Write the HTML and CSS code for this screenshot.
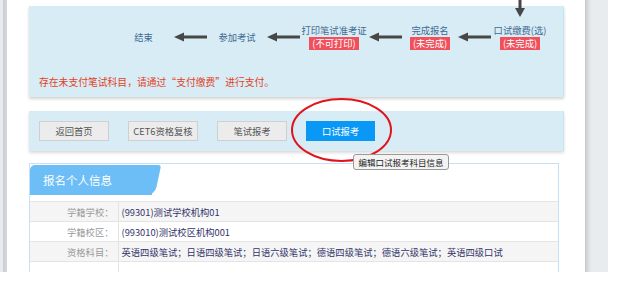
FILE: index.html
```html
<!DOCTYPE html>
<html lang="zh-CN">
<head>
<meta charset="utf-8">
<title>报名信息</title>
<link rel="stylesheet" href="styles.css">
</head>
<body>
<div class="frame">
  <div class="lbar"></div>
  <div class="main">
    <section class="flow-panel">
      <div class="steps">
        <div class="step s-end"><span class="label">结束</span></div>
        <svg class="arrow a1" viewBox="0 0 33 10"><rect x="8" y="3.5" width="25" height="3"/><polygon points="0,5 10,0.5 10,9.5"/></svg>
        <div class="step s-exam"><span class="label">参加考试</span></div>
        <svg class="arrow a2" viewBox="0 0 33 10"><rect x="8" y="3.5" width="25" height="3"/><polygon points="0,5 10,0.5 10,9.5"/></svg>
        <div class="step s-print"><span class="label">打印笔试准考证</span><span class="badge">(不可打印)</span></div>
        <svg class="arrow a3" viewBox="0 0 33 10"><rect x="8" y="3.5" width="25" height="3"/><polygon points="0,5 10,0.5 10,9.5"/></svg>
        <div class="step s-done"><span class="label">完成报名</span><span class="badge">(未完成)</span></div>
        <svg class="arrow a4" viewBox="0 0 33 10"><rect x="8" y="3.5" width="25" height="3"/><polygon points="0,5 10,0.5 10,9.5"/></svg>
        <div class="step s-oral">
          <svg class="down-arrow" viewBox="0 0 10 18"><rect x="3.5" y="0" width="3" height="10"/><polygon points="0,9 10,9 5,18"/></svg>
          <span class="label">口试缴费(选)</span><span class="badge">(未完成)</span>
        </div>
      </div>
      <p class="notice">存在未支付笔试科目，请通过“支付缴费”进行支付。</p>
    </section>

    <section class="actions">
      <button class="btn">返回首页</button>
      <button class="btn">CET6资格复核</button>
      <button class="btn">笔试报考</button>
      <button class="btn btn-primary">口试报考</button>
      <svg class="circle" viewBox="0 0 101 64"><ellipse cx="50.5" cy="32" rx="49.5" ry="31"/></svg>
      <div class="tooltip">编辑口试报考科目信息</div>
    </section>

    <section class="info">
      <div class="tab">报名个人信息</div>
      <table class="info-table">
        <tr class="odd"><th>学籍学校：</th><td>(99301)测试学校机构01</td></tr>
        <tr><th>学籍校区：</th><td>(993010)测试校区机构001</td></tr>
        <tr class="odd"><th>资格科目：</th><td>英语四级笔试；日语四级笔试；日语六级笔试；德语四级笔试；德语六级笔试；英语四级口试</td></tr>
        <tr><th></th><td></td></tr>
      </table>
    </section>
  </div>
  <div class="rbar"></div>
</div>
</body>
</html>
```
FILE: styles.css
```css
* { box-sizing: border-box; }
html, body { margin: 0; padding: 0; background: #fff; }
body {
  font-family: "Noto Sans CJK SC", "Noto Sans", sans-serif;
  font-size: 9.3px;
  color: #333;
}
.frame {
  display: flex;
  height: 272px;
  overflow: hidden;
  width: 608px;
}
.lbar {
  width: 7px;
  flex: none;
  background: linear-gradient(to right, #e9ebee 0, #e9ebee 3px, #cbcfd3 3px, #d3d6da 7px);
}
.rbar {
  width: 23px;
  flex: none;
  background: linear-gradient(to right, #c4c8cc 0, #dadde0 3px, #e8ebee 6px, #e9ecef 23px);
}
.main {
  width: 578px;
  flex: none;
  padding: 6px 0 0 22px;
}

/* flow panel */
.flow-panel {
  width: 535px;
  height: 91px;
  background: #d8ecf5;
  border-right: 1px solid #c5e5ef;
  box-shadow: 0 2px 3px rgba(0,0,0,0.18);
  padding-top: 18px;
}
.steps {
  display: flex;
  align-items: center;
  padding-left: 95px;
  height: 26px;
}
.step {
  display: flex;
  flex-direction: column;
  align-items: center;
  position: relative;
  flex: none;
}
.label {
  color: #3e6a91;
  line-height: 12px;
  white-space: nowrap;
}
.badge {
  margin-top: 1px;
  background: #f0505c;
  color: #fff;
  line-height: 13px;
  padding: 0 3px;
  white-space: nowrap;
}
.s-end { width: 39px; }
.s-exam { width: 40px; margin-left: 10px; }
.s-print { width: 68px; }
.s-done { width: 50px; margin-left: 3px; }
.s-oral { width: 56px; margin-left: 1px; }
.arrow { width: 33px; height: 10px; fill: #474747; flex: none; }
.a1 { margin-left: 11px; }
.a2 { margin-left: 10px; }
.a3 { margin-left: 1px; }
.a4 { margin-left: 3px; }
.down-arrow {
  position: absolute;
  left: 23px;
  top: -25px;
  width: 10px;
  height: 18px;
  fill: #474747;
}
.notice {
  margin: 25px 0 0 10px;
  color: #e2411e;
  font-size: 9.8px;
  line-height: 14px;
}

/* action bar */
.actions {
  position: relative;
  margin-top: 14px;
  width: 535px;
  height: 40px;
  background: #d8ecf5;
  border-right: 1px solid #c5e5ef;
  box-shadow: 0 2px 3px rgba(0,0,0,0.15);
  padding: 10px;
  display: flex;
  gap: 19px;
}
.btn {
  width: 70px;
  height: 20px;
  border: 1px solid #cfcfcf;
  background: #ececec;
  color: #555;
  font-family: inherit;
  font-size: 9.3px;
  padding: 0;
  line-height: 18px;
}
.btn-primary {
  background: #0a98f7;
  border-color: #0a98f7;
  color: #fff;
  width: 69px;
}
.circle {
  position: absolute;
  left: 262px;
  top: -13px;
  width: 101px;
  height: 64px;
  fill: none;
  stroke: #e3131b;
  stroke-width: 2;
}
.tooltip {
  position: absolute;
  left: 324px;
  top: 43px;
  width: 96px;
  height: 16px;
  background: #f3f3f3;
  border: 1px solid #9a9a9a;
  border-radius: 3px;
  color: #222;
  font-size: 8.5px;
  line-height: 14px;
  text-align: center;
  white-space: nowrap;
}

/* info */
.info {
  margin-top: 12px;
  width: 530px;
  height: 120px;
  border: 1px solid #c4e1f6;
  padding: 1px 0 0 0;
}
.tab {
  position: relative;
  width: 122px;
  height: 30px;
  background: #6dbef6;
  color: #fff;
  font-size: 11.5px;
  line-height: 30px;
  padding-left: 13px;
  border-radius: 5px 0 0 0;
}
.tab::after {
  content: "";
  position: absolute;
  right: -6px;
  top: 0;
  width: 14px;
  height: 30px;
  background: #6dbef6;
  transform: skewX(-12deg);
  border-radius: 3px 3px 8px 0;
}
.info-table {
  margin-top: 6px;
  width: 528px;
  border-collapse: collapse;
}
.info-table tr { height: 20px; }
.info-table th, .info-table td {
  border-top: 1px solid #e4e4e4;
  border-bottom: 1px solid #e4e4e4;
  padding: 0;
  line-height: 18px;
  font-weight: normal;
  white-space: nowrap;
}
.info-table th {
  width: 88px;
  text-align: right;
  color: #9a9a9a;
  padding-right: 4px;
  border-right: 1px solid #e4e4e4;
}
.info-table td {
  color: #33336a;
  padding-left: 3px;
}
.info-table tr.odd th, .info-table tr.odd td { background: #f5f5f5; }
```
